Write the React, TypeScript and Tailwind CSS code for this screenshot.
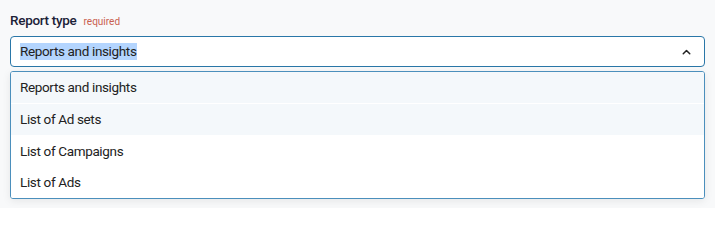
import React from "react";

export default function App() {
  const options = [
    { label: "Reports and insights", bg: "bg-[#f4f8fb]" },
    { label: "List of Ad sets", bg: "bg-[#f4f8fb]" },
    { label: "List of Campaigns", bg: "bg-white" },
    { label: "List of Ads", bg: "bg-white" },
  ];
  return (
    <div
      className="w-[715px] h-[208px] bg-[#f8f9fa] px-[10px] pt-[10px]"
      style={{ fontFamily: "Roboto, 'Liberation Sans', sans-serif" }}
    >
      <div className="flex items-baseline gap-[7px] h-[20px]">
        <span className="text-[13.5px] font-medium tracking-[-0.3px] text-[#1c2237]">Report type</span>
        <span className="text-[10px] text-[#c8604f]">required</span>
      </div>
      <div className="mt-[6px] h-[31px] rounded-[4px] border border-[#2a77a8] bg-white flex items-center justify-between pl-[9px] pr-[13px]">
        <span className="text-[13.5px] tracking-[-0.35px] text-[#222] bg-[#b4d5fe] leading-[17px]">Reports and insights</span>
        <svg width="9" height="6" viewBox="0 0 9 6" fill="none">
          <path d="M1.25 4.75L4.5 1.5L7.75 4.75" stroke="#222" strokeWidth="1.5" strokeLinecap="round" strokeLinejoin="round" />
        </svg>
      </div>
      <div className="mt-[4px] rounded-[3px] border border-[#4b8fbc] bg-white overflow-hidden shadow-[0_2px_8px_rgba(0,0,0,0.08)]">
        {options.map((o, i) => (
          <div
            key={o.label}
            className={`h-[31.5px] flex items-center pl-[9px] text-[13.5px] tracking-[-0.35px] text-[#222] ${o.bg} ${i === 0 ? "border-b border-white" : ""}`}
          >
            {o.label}
          </div>
        ))}
      </div>
    </div>
  );
}
